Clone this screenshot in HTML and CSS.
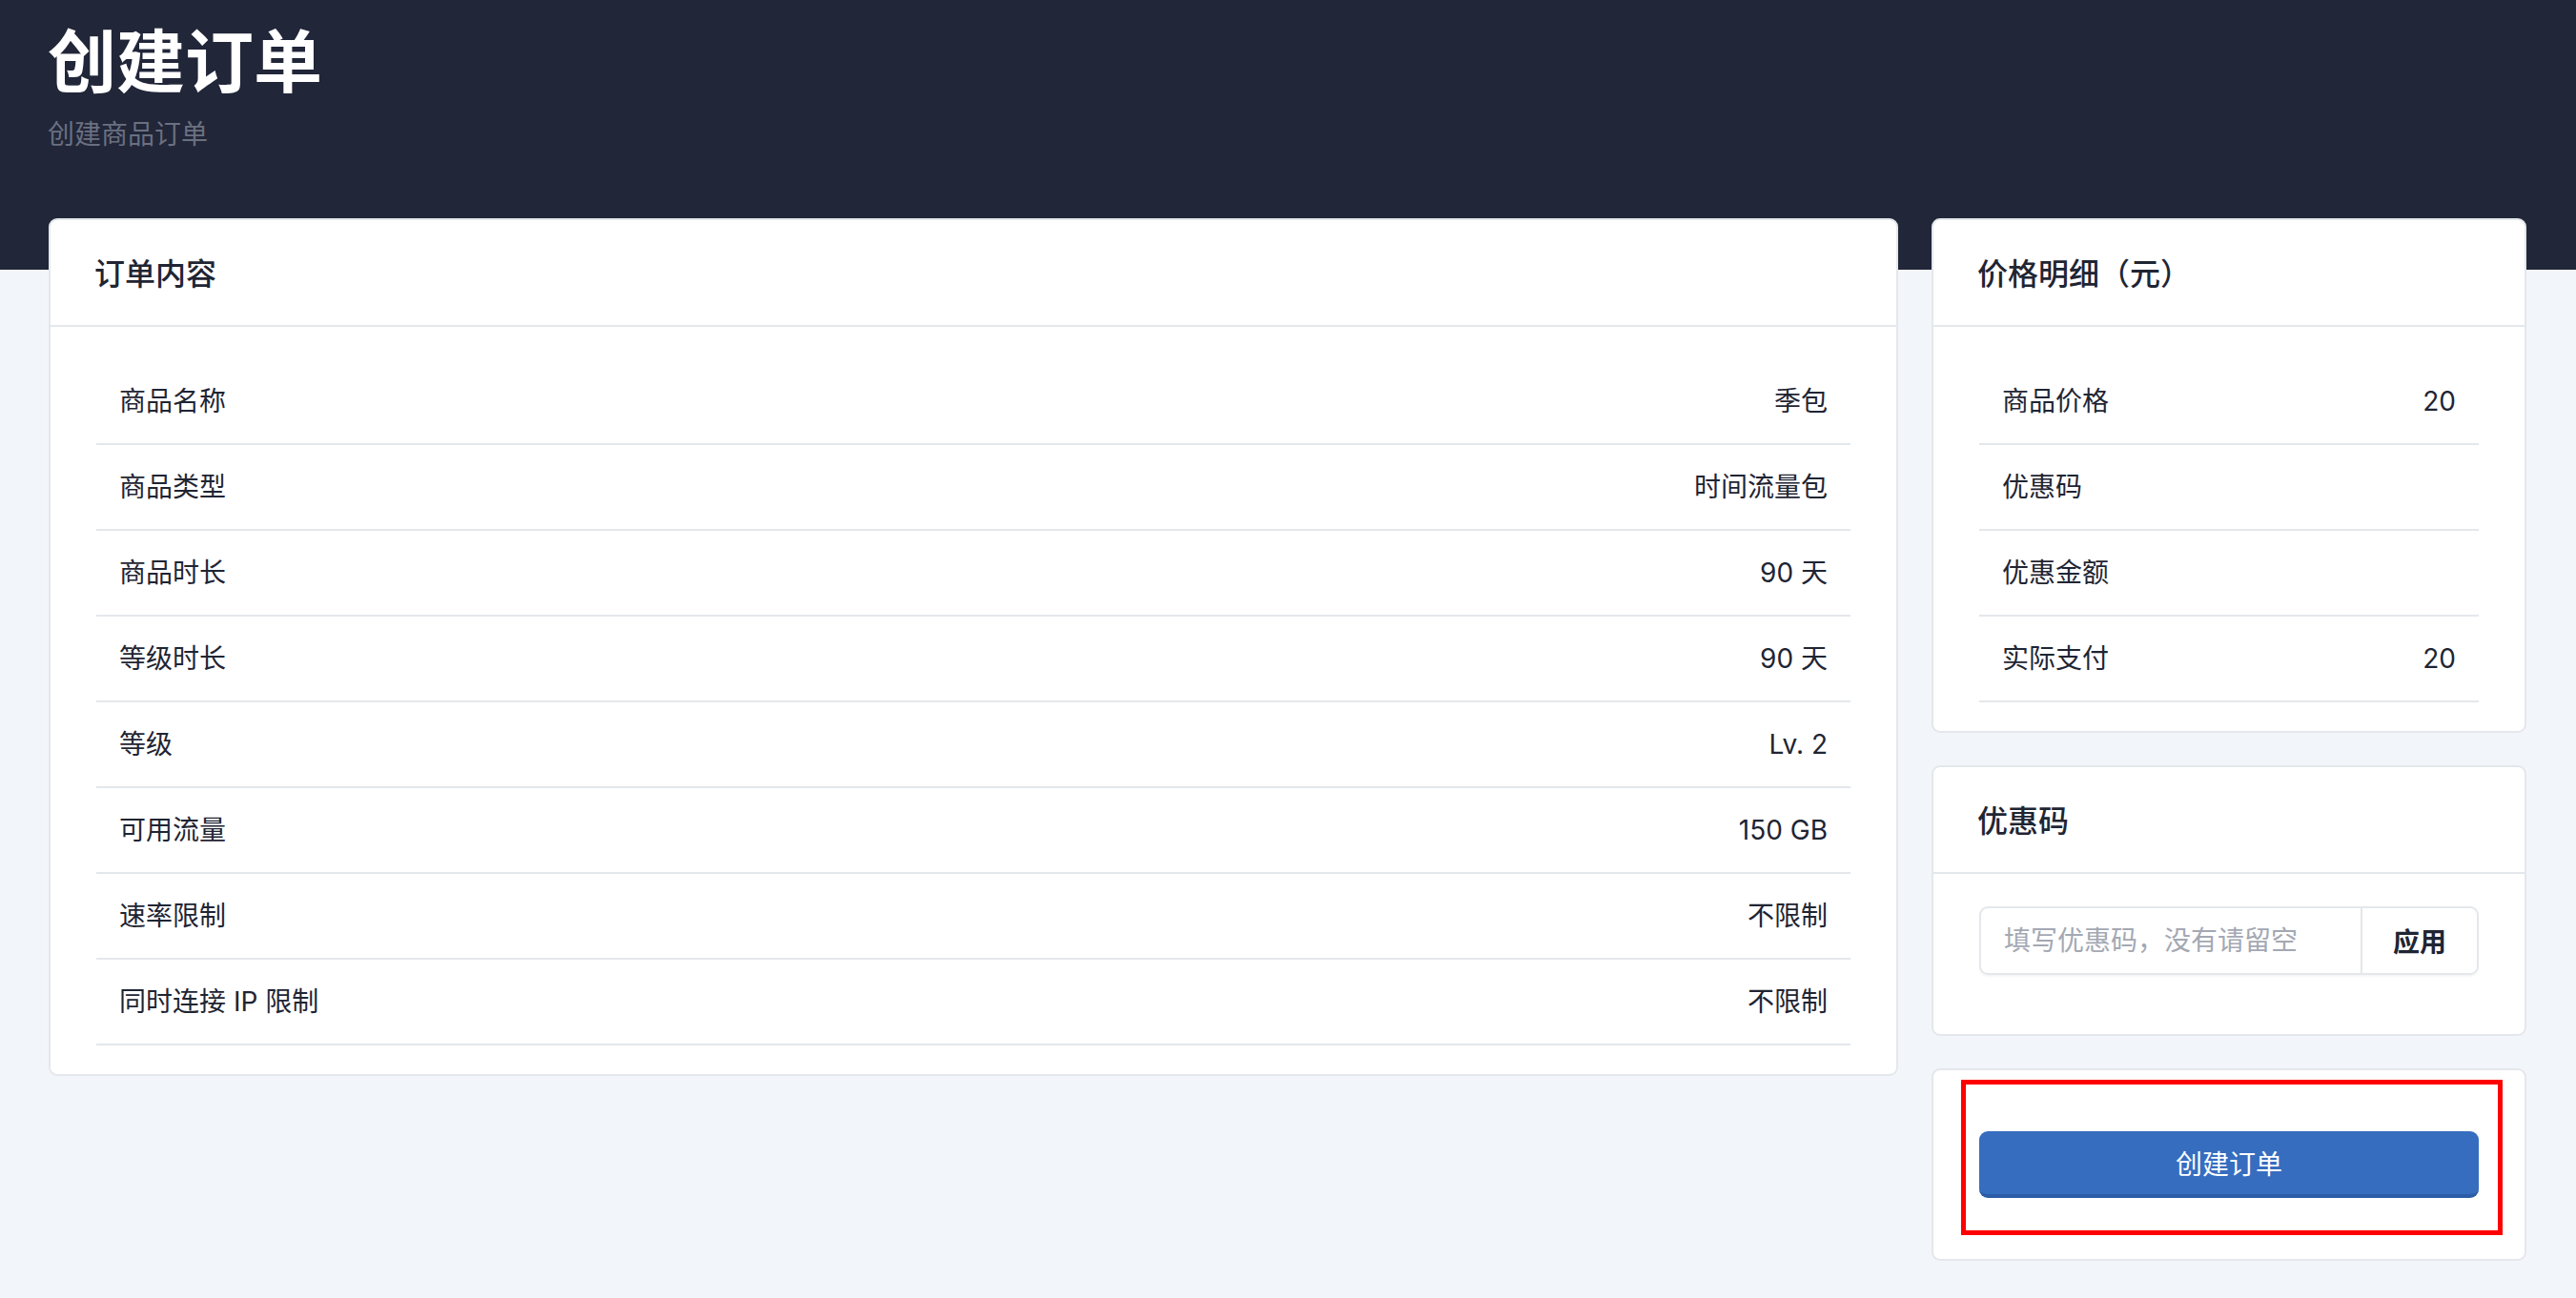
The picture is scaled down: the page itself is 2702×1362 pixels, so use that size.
FILE: index.html
```html
<!DOCTYPE html>
<html>
<head>
    <meta charset="utf-8">
    <link rel="stylesheet" href="styles.css">
    <title>创建订单</title>
</head>
<body>

<div class="page-header">
    <h1>创建订单</h1>
    <p class="page-sub">创建商品订单</p>
</div>

<div class="page-main">
    <!-- left: what is ordered -->
    <div class="card">
        <div class="card-head">订单内容</div>
        <div class="card-body">
            <table class="info-table">
                <tr><td>商品名称</td><td class="val">季包</td></tr>
                <tr><td>商品类型</td><td class="val">时间流量包</td></tr>
                <tr><td>商品时长</td><td class="val">90 天</td></tr>
                <tr><td>等级时长</td><td class="val">90 天</td></tr>
                <tr><td>等级</td><td class="val">Lv. 2</td></tr>
                <tr><td>可用流量</td><td class="val">150 GB</td></tr>
                <tr><td>速率限制</td><td class="val">不限制</td></tr>
                <tr><td>同时连接 IP 限制</td><td class="val">不限制</td></tr>
            </table>
        </div>
    </div>

    <!-- right: price, coupon, submit -->
    <div class="side">
        <div class="card">
            <div class="card-head">价格明细（元）</div>
            <div class="card-body">
                <table class="info-table">
                    <tr><td>商品价格</td><td class="val">20</td></tr>
                    <tr><td>优惠码</td><td class="val"></td></tr>
                    <tr><td>优惠金额</td><td class="val"></td></tr>
                    <tr><td>实际支付</td><td class="val">20</td></tr>
                </table>
            </div>
        </div>

        <div class="card">
            <div class="card-head">优惠码</div>
            <div class="card-body">
                <form class="coupon-form" action="">
                    <input class="coupon-input" type="text" placeholder="填写优惠码，没有请留空">
                    <button class="coupon-btn" type="button">应用</button>
                </form>
            </div>
        </div>

        <div class="card card-submit">
            <div class="card-body submit-body">
                <button class="btn-create" type="button">创建订单</button>
            </div>
            <div class="mark-box"></div>
        </div>
    </div>
</div>

</body>
</html>
```

FILE: styles.css
```css
* {margin: 0; padding: 0; box-sizing: border-box;}

html, body {height: 100%;}
body {
    background: #f2f5f9;
    color: #1f2533;
    font-family: Inter, "Noto Sans CJK SC", sans-serif;
    font-size: 28px;
}

/* dark band on top */
.page-header {
    background: #212639;
    padding: 20px 52px 121px 50px;
}
.page-header h1 {
    color: #fff;
    font-size: 72px;
    line-height: 90px;
    font-weight: 700;
}
.page-sub {
    color: #6b7080;
    font-size: 28px;
    line-height: 42px;
    margin-top: 10px;
}

.page-main {
    display: grid;
    grid-template-columns: 1fr 624px;
    gap: 35px;
    align-items: start;
    padding: 0 52px 0 51px;
    margin-top: -54px;
}

.side {display: flex; flex-direction: column; gap: 34px;}

.card {
    background: #fff;
    border: 2px solid #e4e7eb;
    border-radius: 9px;
}
.card-head {
    padding: 34px 46px 30px 46px;
    line-height: 46px;
    font-size: 32px;
    font-weight: 500;
    border-bottom: 2px solid #e4e7eb;
}
.card-body {padding: 34px 48px 30px 48px;}

.info-table {width: 100%; border-collapse: collapse;}
.info-table td {
    padding: 23px 24px;
    line-height: 42px;
    border-bottom: 2px solid #e4e7eb;
}
.info-table td.val {text-align: right;}

.coupon-form {
    display: flex;
    height: 72px;
    margin-bottom: 32px;
    border: 2px solid #e4e7eb;
    border-radius: 9px;
    box-shadow: 0 2px 2px rgba(0,0,0,0.04);
}
.coupon-input {
    flex: 1;
    min-width: 0;
    border: none;
    outline: none;
    background: transparent;
    padding: 0 24px;
    font-family: inherit;
    font-size: 28px;
    color: #1f2533;
}
.coupon-input::placeholder {color: #a3a8b3;}
.coupon-btn {
    width: 122px;
    border: none;
    border-left: 2px solid #e4e7eb;
    background: #fff;
    border-radius: 0 8px 8px 0;
    font-family: inherit;
    font-size: 28px;
    font-weight: 600;
    color: #1f2533;
}

.card-submit {position: relative;}
.submit-body {padding: 64px 48px;}
.btn-create {
    display: block;
    width: 100%;
    height: 70px;
    border: none;
    border-bottom: 4px solid #2c5ca6;
    border-radius: 9px;
    background: #366dbf;
    color: #fff;
    font-family: inherit;
    font-size: 28px;
}

/* red annotation frame drawn over the submit card */
.mark-box {
    position: absolute;
    left: 29px;
    top: 10px;
    width: 568px;
    height: 163px;
    border: 5px solid #ff0000;
}
```
